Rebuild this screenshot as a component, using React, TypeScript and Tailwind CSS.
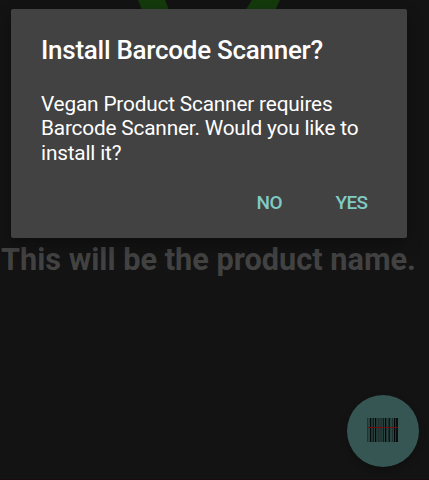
const bars = [
  [0, 1, "#203432"], [1, 1.4, "#2b4744"], [3, 1.2, "#050909"], [5, 1, "#213633"], [6, 1, "#101c1b"],
  [8, 1.2, "#030606"], [10, 1, "#253c39"], [11, 1, "#1d302e"], [12.5, 1.4, "#22312f"], [14.4, 1, "#1c302e"],
  [16, 1, "#101c1b"], [18, 1.2, "#030606"], [20, 1, "#2a4542"], [21.5, 1.4, "#0b1514"], [23.3, 1, "#2a4542"],
  [25, 1, "#1d302e"], [27, 1.2, "#030606"], [29, 2, "#090f0e"],
] as const;

function BarcodeIcon() {
  return (
    <svg className="mb-[2px] mr-px" width="31" height="24" viewBox="0 0 31 24" aria-hidden="true">
      <rect width="31" height="24" fill="#2b4643" />
      {bars.map(([x, w, fill]) => (
        <rect key={x} x={x} width={w} height="24" fill={fill} />
      ))}
      <rect x="1" y="9" width="30" height="1" fill="#700c10" />
    </svg>
  );
}

function InstallDialog() {
  return (
    <section
      role="dialog"
      className="absolute left-[11px] top-[8.5px] flex h-[229px] w-[396px] flex-col rounded-[2px] bg-[#424242] pl-[30px] pr-[39.5px] pt-[24px] text-white shadow-[0_6px_16px_rgba(0,0,0,0.3)]"
    >
      <h1 className="h-[34px] whitespace-nowrap text-[26px] font-medium leading-[34px] tracking-[-0.27px]">
        Install Barcode Scanner?
      </h1>
      <p className="mt-[25.5px] whitespace-nowrap text-[20.8px] leading-[24.4px] tracking-[-0.18px]">
        Vegan Product Scanner requires
        <br />
        Barcode Scanner. Would you like to
        <br />
        install it?
      </p>
      <div className="mt-[26px] flex justify-end gap-[53.5px] text-[19px] font-medium leading-6 tracking-[-0.6px] text-[#80cbc4]">
        <button>NO</button>
        <button>YES</button>
      </div>
    </section>
  );
}

export default function App() {
  return (
    <main className="relative flex h-[480px] w-[429px] flex-col overflow-hidden border-b border-[#190b10] bg-[#131313] font-['Roboto',sans-serif]">
      <svg className="h-[238px] w-full shrink-0" viewBox="0 0 429 238" aria-hidden="true">
        <path d="M138 0H165L199 84 252 0H280L204 160Z" fill="#143a0c" />
      </svg>
      <h2 className="whitespace-nowrap pl-[1px] pt-[1px] text-[30.7px] font-bold leading-[42px] text-[#424242]">
        This will be the product name.
      </h2>
      <InstallDialog />
      <button
        aria-label="Scan barcode"
        className="absolute left-[347px] top-[395px] flex size-[72px] items-center justify-center rounded-full bg-[#355652] shadow-[0_3px_7px_rgba(0,0,0,0.25)]"
      >
        <BarcodeIcon />
      </button>
    </main>
  );
}
